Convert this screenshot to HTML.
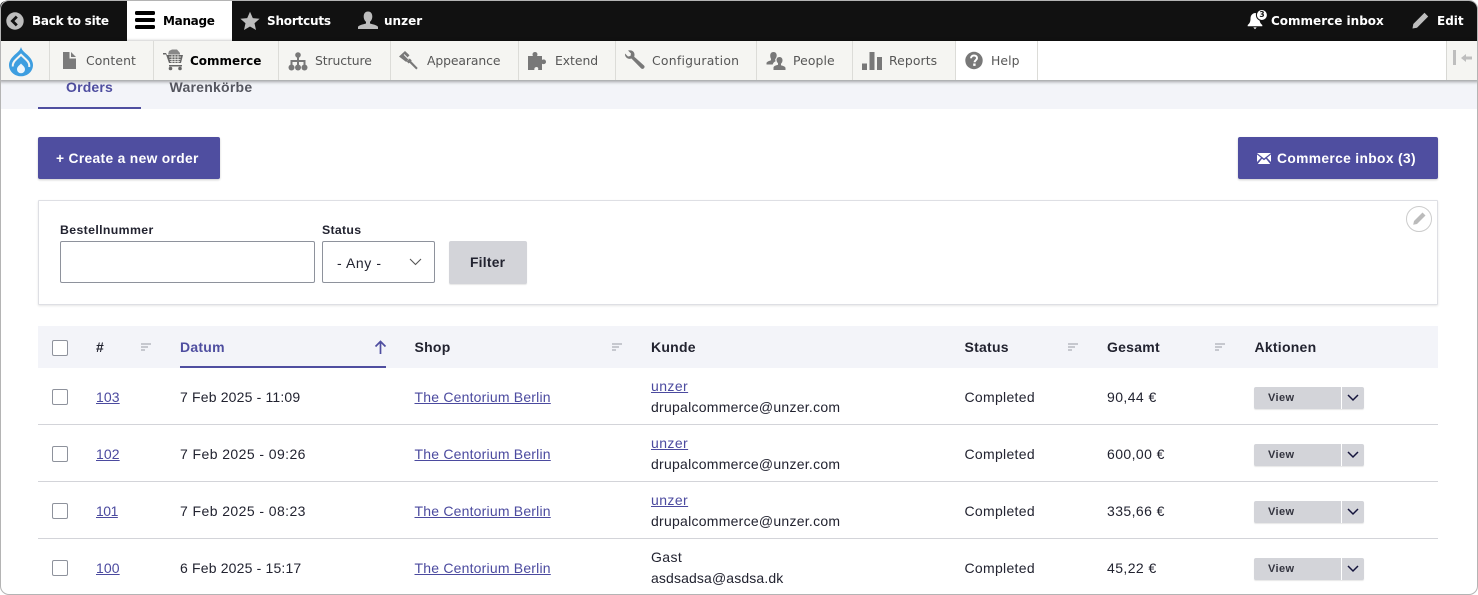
<!DOCTYPE html>
<html lang="en"><head><meta charset="utf-8"><title>Orders</title>
<style>
html,body{margin:0;padding:0;background:#fff;width:1478px;height:595px;overflow:hidden}
body{position:relative;font-family:"Liberation Sans",sans-serif;color:#222330;font-size:14px}
.t{position:absolute;white-space:nowrap;line-height:20px;height:20px}
svg{position:absolute;display:block}
.bar{font-family:"DejaVu Sans",sans-serif;font-weight:700;font-size:12px;color:#fff;letter-spacing:0}
.nav{font-family:"DejaVu Sans",sans-serif;font-size:12.4px;color:#565656;letter-spacing:.1px}
.sep{position:absolute;top:41px;width:1px;height:39px;background:#dcdcd8}
.b{font-weight:700;letter-spacing:.25px}
.c{font-size:14px;letter-spacing:.42px}
.m{letter-spacing:.26px}.l{letter-spacing:.2px}.s{letter-spacing:.3px}.d{letter-spacing:.17px}.n{letter-spacing:.1px}
a{color:#4b4a9f;text-decoration:underline}
.cb{position:absolute;left:52px;width:14px;height:14px;border:1px solid #8e929c;border-radius:2px;background:#fff}
.line{position:absolute;left:38px;width:1400px;height:1px;background:#d3d4d9}
.v{position:absolute;left:1254px;width:110px;height:22px;background:#d3d4d9;border-radius:2px;box-shadow:0 1px 1px rgba(0,0,0,.1)}
.v i{position:absolute;left:87px;top:0;width:1px;height:22px;background:#fff}
.v b{position:absolute;left:14px;top:2px;font-size:11px;line-height:19px;letter-spacing:.4px;color:#33343f}
.v svg{left:93px;top:7px}
</style></head><body>

<div style="position:absolute;left:0;top:1px;width:1478px;height:40px;background:#111;border-radius:6px 9px 0 0"></div>
<div style="position:absolute;left:127px;top:1px;width:105px;height:40px;background:#fff"></div>
<div class="t bar" style="left:32px;top:11px;letter-spacing:-.25px">Back to site</div>
<svg style="left:6px;top:12px" width="18" height="18" viewBox="0 0 18 18"><circle cx="9" cy="9" r="8.7" fill="#bdbdbd"/><path d="M10.8 4.600 6.400 9l4.400 4.400" fill="none" stroke="#111" stroke-width="2.800"/></svg>
<svg style="left:135px;top:11px" width="20" height="18" viewBox="0 0 20 18"><rect x="0" y="0" width="20" height="4" rx="1.500" fill="#000"/><rect x="0" y="7" width="20" height="4" rx="1.500" fill="#000"/><rect x="0" y="14" width="20" height="4" rx="1.500" fill="#000"/></svg>
<div class="t bar" style="left:163px;top:11px;color:#000;letter-spacing:-.3px">Manage</div>
<svg style="left:240px;top:11px" width="20" height="20" viewBox="0 0 20 20"><path d="M10 .8l2.800 6.300 6.800.7-5.100 4.500 1.500 6.700L10 15.500 4 19l1.500-6.700L.4 7.800l6.800-.7z" fill="#bdbdbd"/></svg>
<div class="t bar" style="left:267px;top:11px;letter-spacing:-.2px">Shortcuts</div>
<svg style="left:358px;top:10px" width="20" height="21" viewBox="0 0 20 20"><path d="M10 1c3 0 4.300 2.400 4.300 5 0 2.200-1 4.300-2.300 5.300v1.700c2 .8 7.500 1.500 8 3.500v2H0v-2c.5-2 6-2.700 8-3.500v-1.700C6.700 10.300 5.700 8.200 5.700 6 5.700 3.400 7 1 10 1z" fill="#bdbdbd"/></svg>
<div class="t bar" style="left:384px;top:11px">unzer</div>

<svg style="left:1246px;top:9px" width="24" height="22" viewBox="0 0 24 22"><path d="M9 4c-3 .4-4.500 2.800-4.500 5.500 0 3-.8 5-2.800 6.500v1.200h14.600V16c-2-1.500-2.800-3.500-2.800-6.500C13.500 6.800 12 4.400 9 4z" fill="#fff"/><path d="M7.300 18.400h3.400L9 20.300z" fill="#fff"/><circle cx="15.900" cy="6" r="5.500" fill="#fff" stroke="#111"/></svg>
<div class="t" style="left:1258px;top:5px;width:8px;text-align:center;font:700 7.500px/20px 'DejaVu Sans',sans-serif;color:#111">3</div>
<div class="t bar" style="left:1271px;top:11px">Commerce inbox</div>
<svg style="left:1411px;top:12px" width="18" height="18" viewBox="0 0 18 18"><path d="M13.500 .8l3.700 3.700L6 15.700 1.500 16.500l.8-4.500z M.5 17.500l1-1" fill="#bdbdbd"/></svg>
<div class="t bar" style="left:1437px;top:11px">Edit</div>

<div style="position:absolute;left:0;top:41px;width:1478px;height:39px;background:#fff;box-shadow:0 1px 3px 1px rgba(0,0,0,.33);z-index:3"></div>
<div style="position:absolute;left:0;top:41px;width:955px;height:39px;background:#f5f5f2;z-index:3"></div>
<div style="position:absolute;left:1446px;top:41px;width:32px;height:39px;background:#f5f5f2;border-left:1px solid #d8d8d4;box-sizing:border-box;z-index:3"></div>

<div style="position:absolute;left:0;top:0;width:1478px;height:595px;z-index:4">
<div class="sep" style="left:49px"></div><div class="sep" style="left:153px"></div><div class="sep" style="left:278px"></div><div class="sep" style="left:390px"></div><div class="sep" style="left:518px"></div><div class="sep" style="left:615px"></div><div class="sep" style="left:756px"></div><div class="sep" style="left:852px"></div><div class="sep" style="left:955px"></div><div class="sep" style="left:1037px"></div>

<svg style="left:8px;top:46px" width="26" height="32" viewBox="0 0 26 32"><path d="M13 1c1 3.500 3.500 5.300 6.300 7.800C22.300 11.600 25 15 25 19c0 6.300-5.400 11.300-12 11.300S1 25.300 1 19c0-4 2.700-7.400 5.700-10.200C9.500 6.300 12 4.500 13 1z" fill="#3d9ee0"/><path d="M4.800 20.500C4.300 17 6.500 14.800 8.500 13L13 8.800l5 4.700c2.300 2.100 3.800 4.200 3.200 7.500" fill="none" stroke="#f5f5f2" stroke-width="2"/><path d="M13 17.500c1.300 1.700 4 3.200 4 5.800a4 4 0 0 1-8 0c0-2.600 2.700-4.100 4-5.800z" fill="#eef6fc"/></svg>

<svg style="left:62px;top:51px" width="15" height="19" viewBox="0 0 15 19"><path d="M1 1h6.500v6.500H14V18H1zM9 1l5 5H9z" fill="#7b7b7b"/></svg>
<div class="t nav" style="left:86px;top:51px">Content</div>
<svg style="left:162px;top:49px" width="22" height="22" viewBox="0 0 22 22"><path d="M1 4h3l1 2h16l-2 8H7L4 5.500H1z" fill="#666"/><path d="M7 2l3-1.500h5L18 4v1.500H6z" fill="#888"/><path d="M7 8h12M7.500 10.500h11M8 12.500h10M10 6v8M13 6v8M16 6v8" stroke="#f5f5f2" stroke-width=".8"/><path d="M7 16h13v1.500H7z" fill="#666"/><circle cx="8.500" cy="19.500" r="1.800" fill="#666"/><circle cx="18" cy="19.500" r="1.800" fill="#666"/></svg>
<div class="t nav" style="left:190px;top:51px;color:#000;font-weight:700;font-size:12px;letter-spacing:0">Commerce</div>
<svg style="left:288px;top:52px" width="20" height="19" viewBox="0 0 20 19"><circle cx="10" cy="3" r="2.800" fill="#787878"/><path d="M9 4h2v4h6.500v5h-2v-3H11v3H9v-3H4.500v3h-2V8H9z" fill="#787878"/><circle cx="3.500" cy="15.500" r="3" fill="#787878"/><circle cx="10" cy="15.500" r="3" fill="#787878"/><circle cx="16.500" cy="15.500" r="3" fill="#787878"/></svg>
<div class="t nav" style="left:315px;top:51px;letter-spacing:-.1px">Structure</div>
<svg style="left:398px;top:50px" width="21" height="20" viewBox="0 0 21 20"><path d="M1 6.500L7 1l4.500 4.200-2 2.300 1.500 1.300-2.800 3.200z" fill="#787878"/><path d="M6 4.500l4.500 4.500" stroke="#f5f5f2" stroke-width="1"/><path d="M11.800 8.500l1.900 2-.6.600 6.600 6.900-1.400 1.500-6.800-6.800-.8.800-2-2z" fill="#787878"/></svg>
<div class="t nav" style="left:427px;top:51px;letter-spacing:-.1px">Appearance</div>
<svg style="left:527px;top:51px" width="21" height="20" viewBox="0 0 21 20"><path d="M1 5h5c-.8-1-.8-4 2-4s2.800 3 2 4h5v4c1-.8 4-.8 4 1.800s-3 2.700-4 1.800V19h-4c.5-1 .5-3-1.500-3S7 18 7.500 19H1z" fill="#787878"/></svg>
<div class="t nav" style="left:555px;top:51px;letter-spacing:-.05px">Extend</div>
<svg style="left:624px;top:50px" width="21" height="20" viewBox="0 0 21 20"><path d="M1 3.500L4 6.500l2.500-.5.500-2.500-3-3c3-1 6.500.8 6.500 4 0 .8 0 1.500-.3 2.200l9.800 8.800c1 1 .6 2-.1 2.700s-1.900 1-2.900 0L7.400 8.500C4 10 .5 7 1 3.500z" fill="#787878"/></svg>
<div class="t nav" style="left:652px;top:51px;letter-spacing:.25px">Configuration</div>
<svg style="left:766px;top:51px" width="20" height="20" viewBox="0 0 20 20"><path d="M7.500 1c2.300 0 3.200 1.800 3.200 3.500 0 1.200-.5 2.500-1.200 3.300-.5.600-.5 1.700.2 2.300-1.500.7-2.700 1.900-3 3.400H.5v-1.500c.5-1.500 3-2 4.500-2.700V7.800C4.500 7 4.200 5.800 4.200 4.500 4.200 2.800 5.200 1 7.500 1z" fill="#787878"/><path d="M13.500 6c2 0 3 1.500 3 3.200 0 1.300-.6 2.700-1.500 3.500v1.600c1.500.5 3.800 1 4.500 2.500V19H7.500v-2.700c.7-1.500 3-2 4.500-2.500v-1.600c-.9-.8-1.500-2.200-1.500-3.500C10.500 7.500 11.500 6 13.500 6z" fill="#787878"/></svg>
<div class="t nav" style="left:793px;top:51px">People</div>
<svg style="left:862px;top:51px" width="20" height="20" viewBox="0 0 20 20"><path d="M0 12.500h5v6.500H0zM7.500 1h5v18h-5zM15 6h5v13h-5z" fill="#787878"/></svg>
<div class="t nav" style="left:889px;top:51px">Reports</div>
<svg style="left:965px;top:51px" width="18" height="19" viewBox="0 0 18 18"><circle cx="9" cy="9" r="8.700" fill="#787878"/><path d="M6 6.800c0-1.800 1.300-2.800 3-2.800s3 1 3 2.600c0 2-2.400 2.200-2.400 4.200" fill="none" stroke="#fff" stroke-width="2"/><rect x="8.200" y="12" width="2.400" height="2.400" fill="#fff"/></svg>
<div class="t nav" style="left:991px;top:51px">Help</div>
<svg style="left:1453px;top:50px" width="20" height="16" viewBox="0 0 20 16"><path d="M0 0h3v15H0zM8 8l5-4v2.500h6v3h-6V12z" fill="#bebebe"/></svg>
</div>

<div style="position:absolute;left:0;top:80px;width:1478px;height:29px;background:#f3f4f9"></div>
<div class="t" style="left:66px;top:77px;font-weight:700;font-size:14px;letter-spacing:.18px;color:#4f4ea0">Orders</div>
<div class="t" style="left:169.500px;top:77px;font-weight:700;font-size:14px;letter-spacing:.25px;color:#55565f">Warenkörbe</div>
<div style="position:absolute;left:38px;top:107px;width:103px;height:2px;background:#4f4ea0"></div>

<div style="position:absolute;left:38px;top:137px;width:182px;height:42px;background:#4f4ea0;border-radius:2px;box-shadow:0 1px 2px rgba(0,0,0,.2)"></div>
<div class="t" style="left:56px;top:149px;color:#fff;font-weight:700;letter-spacing:.33px;font-size:13.800px">+ Create a new order</div>
<div style="position:absolute;left:1238px;top:137px;width:200px;height:42px;background:#4f4ea0;border-radius:2px;box-shadow:0 1px 2px rgba(0,0,0,.2)"></div>
<svg style="left:1257px;top:153px" width="14" height="11" viewBox="0 0 14 11"><path d="M0 0h14L7 5.500zM0 1.500l4 3.300L0 9zM14 1.500l-4 3.300L14 9zM.8 11L5 5.700 7 7.200l2-1.500L13.200 11z" fill="#fff"/></svg>
<div class="t" style="left:1277px;top:149px;color:#fff;font-weight:700;letter-spacing:.35px;font-size:13.800px">Commerce inbox (3)</div>

<div style="position:absolute;left:38px;top:200px;width:1398px;height:103px;background:#fff;border:1px solid #dedfe4;box-shadow:0 1px 2px rgba(0,0,0,.1);border-radius:1px"></div>
<div class="t" style="left:60px;top:220px;font-weight:700;font-size:12.300px;letter-spacing:.37px">Bestellnummer</div>
<div class="t" style="left:322px;top:220px;font-weight:700;font-size:12.300px;letter-spacing:.3px">Status</div>
<div style="position:absolute;left:60px;top:241px;width:253px;height:40px;border:1px solid #8e929c;border-radius:2px"></div>
<div style="position:absolute;left:322px;top:241px;width:111px;height:40px;border:1px solid #8e929c;border-radius:2px"></div>
<div class="t" style="left:337px;top:253px;letter-spacing:.6px">- Any -</div>
<svg style="left:409px;top:258px" width="13" height="8" viewBox="0 0 13 8"><path d="M1 1l5.500 5.500L12 1" fill="none" stroke="#555" stroke-width="1.100"/></svg>
<div style="position:absolute;left:449px;top:241px;width:78px;height:43px;background:#d3d4d9;border-radius:2px;box-shadow:0 1px 1px rgba(0,0,0,.1)"></div>
<div class="t" style="left:470px;top:252px;font-weight:700;letter-spacing:.25px;font-size:13.800px;line-height:21px">Filter</div>
<svg style="left:1406px;top:206px" width="26" height="26" viewBox="0 0 26 26"><circle cx="13" cy="13" r="12.500" fill="#fff" stroke="#ccc"/><path d="M16.500 6.500l3 3-8.500 8.500-3.800.8.800-3.800z" fill="#bbb"/></svg>

<div style="position:absolute;left:38px;top:326px;width:1400px;height:42px;background:#f3f4f9"></div>
<div class="cb" style="top:340px"></div>
<div class="t b" style="left:96px;top:337px">#</div>
<div class="t b" style="left:180px;top:337px;color:#4f4ea0">Datum</div>
<div style="position:absolute;left:180px;top:366px;width:206px;height:2px;background:#4f4ea0"></div>
<svg style="left:374px;top:340px" width="13" height="14" viewBox="0 0 13 14"><path d="M6.500 14V1.500M1.500 6.500l5-5 5 5" fill="none" stroke="#4f4ea0" stroke-width="1.700"/></svg>
<div class="t b" style="left:414.500px;top:337px">Shop</div>
<div class="t b" style="left:651px;top:337px">Kunde</div>
<div class="t b" style="left:964.500px;top:337px">Status</div>
<div class="t b" style="left:1107px;top:337px">Gesamt</div>
<div class="t b" style="left:1254.500px;top:337px">Aktionen</div>
<svg style="left:141px;top:343px" width="10" height="8" viewBox="0 0 10 8"><path d="M0 .5h10v1H0zM0 3.500h7v1H0zM0 6.500h4v1H0z" fill="#9a9ba5"/></svg>
<svg style="left:612px;top:343px" width="10" height="8" viewBox="0 0 10 8"><path d="M0 .5h10v1H0zM0 3.500h7v1H0zM0 6.500h4v1H0z" fill="#9a9ba5"/></svg>
<svg style="left:1068px;top:343px" width="10" height="8" viewBox="0 0 10 8"><path d="M0 .5h10v1H0zM0 3.500h7v1H0zM0 6.500h4v1H0z" fill="#9a9ba5"/></svg>
<svg style="left:1215px;top:343px" width="10" height="8" viewBox="0 0 10 8"><path d="M0 .5h10v1H0zM0 3.500h7v1H0zM0 6.500h4v1H0z" fill="#9a9ba5"/></svg>

<!-- row 1 -->
<div class="cb" style="top:389px"></div>
<div class="t c n" style="left:96px;top:387px"><a href="#">103</a></div>
<div class="t c d" style="left:180px;top:387px">7 Feb 2025 - 11:09</div>
<div class="t c l" style="left:414.500px;top:387px"><a href="#">The Centorium Berlin</a></div>
<div class="t c" style="left:651px;top:376px"><a href="#">unzer</a></div>
<div class="t c m" style="left:651px;top:397px">drupalcommerce@unzer.com</div>
<div class="t c s" style="left:964.500px;top:387px">Completed</div>
<div class="t c" style="left:1107px;top:387px">90,44 €</div>
<div class="v" style="top:387px"><b>View</b><i></i><svg width="12" height="8" viewBox="0 0 12 8"><path d="M1 1l5 5 5-5" fill="none" stroke="#14143c" stroke-width="1.500"/></svg></div>
<div class="line" style="top:424px"></div>
<!-- row 2 -->
<div class="cb" style="top:446px"></div>
<div class="t c n" style="left:96px;top:444px"><a href="#">102</a></div>
<div class="t c" style="left:180px;top:444px">7 Feb 2025 - 09:26</div>
<div class="t c l" style="left:414.500px;top:444px"><a href="#">The Centorium Berlin</a></div>
<div class="t c" style="left:651px;top:433px"><a href="#">unzer</a></div>
<div class="t c m" style="left:651px;top:454px">drupalcommerce@unzer.com</div>
<div class="t c s" style="left:964.500px;top:444px">Completed</div>
<div class="t c" style="left:1107px;top:444px">600,00 €</div>
<div class="v" style="top:444px"><b>View</b><i></i><svg width="12" height="8" viewBox="0 0 12 8"><path d="M1 1l5 5 5-5" fill="none" stroke="#14143c" stroke-width="1.500"/></svg></div>
<div class="line" style="top:481px"></div>
<!-- row 3 -->
<div class="cb" style="top:503px"></div>
<div class="t c" style="left:96px;top:501px;letter-spacing:-.5px"><a href="#">101</a></div>
<div class="t c" style="left:180px;top:501px">7 Feb 2025 - 08:23</div>
<div class="t c l" style="left:414.500px;top:501px"><a href="#">The Centorium Berlin</a></div>
<div class="t c" style="left:651px;top:490px"><a href="#">unzer</a></div>
<div class="t c m" style="left:651px;top:511px">drupalcommerce@unzer.com</div>
<div class="t c s" style="left:964.500px;top:501px">Completed</div>
<div class="t c" style="left:1107px;top:501px">335,66 €</div>
<div class="v" style="top:501px"><b>View</b><i></i><svg width="12" height="8" viewBox="0 0 12 8"><path d="M1 1l5 5 5-5" fill="none" stroke="#14143c" stroke-width="1.500"/></svg></div>
<div class="line" style="top:538px"></div>
<!-- row 4 -->
<div class="cb" style="top:560px"></div>
<div class="t c n" style="left:96px;top:558px"><a href="#">100</a></div>
<div class="t c d" style="left:180px;top:558px">6 Feb 2025 - 15:17</div>
<div class="t c l" style="left:414.500px;top:558px"><a href="#">The Centorium Berlin</a></div>
<div class="t c" style="left:651px;top:547px">Gast</div>
<div class="t c" style="left:651px;top:568px;letter-spacing:.13px">asdsadsa@asdsa.dk</div>
<div class="t c s" style="left:964.500px;top:558px">Completed</div>
<div class="t c" style="left:1107px;top:558px">45,22 €</div>
<div class="v" style="top:558px"><b>View</b><i></i><svg width="12" height="8" viewBox="0 0 12 8"><path d="M1 1l5 5 5-5" fill="none" stroke="#14143c" stroke-width="1.500"/></svg></div>
<div class="line" style="top:594px"></div>

<!-- window frame -->
<div style="position:absolute;left:0;top:0;width:1476px;height:593px;border:1px solid #b4b4b4;border-radius:9px;z-index:9;pointer-events:none"></div>
</body></html>
